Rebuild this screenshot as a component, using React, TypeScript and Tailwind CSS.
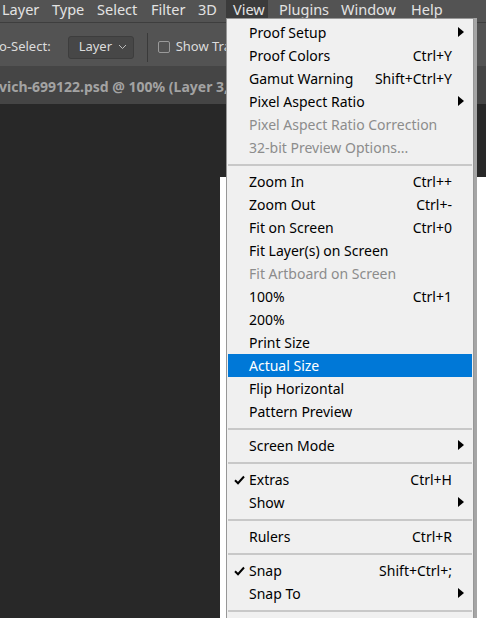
import React from "react";

type Item =
  | { sep: true }
  | {
      label: string;
      shortcut?: string;
      sub?: boolean;
      disabled?: boolean;
      checked?: boolean;
      active?: boolean;
    };

const items: Item[] = [
  { label: "Proof Setup", sub: true },
  { label: "Proof Colors", shortcut: "Ctrl+Y" },
  { label: "Gamut Warning", shortcut: "Shift+Ctrl+Y" },
  { label: "Pixel Aspect Ratio", sub: true },
  { label: "Pixel Aspect Ratio Correction", disabled: true },
  { label: "32-bit Preview Options...", disabled: true },
  { sep: true },
  { label: "Zoom In", shortcut: "Ctrl++" },
  { label: "Zoom Out", shortcut: "Ctrl+-" },
  { label: "Fit on Screen", shortcut: "Ctrl+0" },
  { label: "Fit Layer(s) on Screen" },
  { label: "Fit Artboard on Screen", disabled: true },
  { label: "100%", shortcut: "Ctrl+1" },
  { label: "200%" },
  { label: "Print Size" },
  { label: "Actual Size", active: true },
  { label: "Flip Horizontal" },
  { label: "Pattern Preview" },
  { sep: true },
  { label: "Screen Mode", sub: true },
  { sep: true },
  { label: "Extras", shortcut: "Ctrl+H", checked: true },
  { label: "Show", sub: true },
  { sep: true },
  { label: "Rulers", shortcut: "Ctrl+R" },
  { sep: true },
  { label: "Snap", shortcut: "Shift+Ctrl+;", checked: true },
  { label: "Snap To", sub: true },
  { sep: true },
];

// top menu entries, with the box width / left padding read off the screenshot
const topMenus = [
  { name: "Layer", cls: "w-[45px] pl-[2px]" },
  { name: "Type", cls: "w-[45px] pl-[7px]" },
  { name: "Select", cls: "w-[54px] pl-[7px]" },
  { name: "Filter", cls: "w-[47px] pl-[7px]" },
  { name: "3D", cls: "w-[35px] pl-[7px]" },
  { name: "View", cls: "w-[42px] pl-[7px] bg-[#3b3b3b]" },
  { name: "Plugins", cls: "w-[66px] pl-[11px]" },
  { name: "Window", cls: "w-[70px] pl-[7px]" },
  { name: "Help", cls: "w-[60px] pl-[7px]" },
];

const Check = () => (
  <svg width="11" height="10" viewBox="0 0 11 10" className="absolute left-[6px] top-[7px]">
    <path d="M1 5.2 L4 8.2 L10 1.5" fill="none" stroke="#000" strokeWidth="2" />
  </svg>
);

const Arrow = ({ color }: { color: string }) => (
  <svg width="6" height="10" viewBox="0 0 6 10" className="absolute right-[8px] top-[6px]">
    <path d="M0 0 L6 5 L0 10 Z" fill={color} />
  </svg>
);

const MenuRow = ({ item }: { item: Item }) => {
  if ("sep" in item) {
    return (
      <div className="flex h-[11px] items-center px-[1px]">
        <div className="h-[2px] w-full bg-[#c8c8c8]" />
      </div>
    );
  }
  const text = item.active ? "text-white" : item.disabled ? "text-[#8c8c8c]" : "text-black";
  return (
    <div
      className={`relative mx-[1px] flex h-[23px] items-center pl-[21px] pr-[20px] ${text} ${
        item.active ? "bg-[#0078d7]" : ""
      }`}
    >
      {item.checked && <Check />}
      <span className="flex-1">{item.label}</span>
      {item.shortcut && <span>{item.shortcut}</span>}
      {item.sub && <Arrow color={item.active ? "#fff" : "#000"} />}
    </div>
  );
};

export default function App() {
  return (
    <div
      className="relative flex h-[618px] w-[486px] flex-col overflow-hidden bg-[#282828]"
      style={{ fontFamily: '"Noto Sans", "Open Sans", sans-serif' }}
    >
      {/* menu bar */}
      <div className="flex h-[22px] items-center whitespace-nowrap bg-[#535353] text-[14.5px] leading-[17px] text-[#e3e3e3]">
        {topMenus.map((m) => (
          <div key={m.name} className={`flex h-full shrink-0 items-start pt-[1px] ${m.cls}`}>
            {m.name}
          </div>
        ))}
      </div>
      <div className="h-[1px] bg-[#3e3e3e]" />

      {/* options bar */}
      <div className="flex h-[43px] items-center whitespace-nowrap bg-[#535353] pt-[5px] text-[13px] text-[#dcdcdc]">
        <span className="-ml-[1px]">o-Select:</span>
        <div className="ml-[17px] flex h-[23px] w-[66px] shrink-0 items-center justify-between rounded-[3px] border border-[#3d3d3d] bg-[#474747] pl-[10px] pr-[6px]">
          <span>Layer</span>
          <svg width="9" height="6" viewBox="0 0 9 6">
            <path d="M1 1 L4.5 4.5 L8 1" fill="none" stroke="#bdbdbd" strokeWidth="1" />
          </svg>
        </div>
        <div className="ml-[13px] h-[29px] w-[1px] shrink-0 bg-[#3a3a3a]" />
        <div className="ml-[10px] h-[12px] w-[12px] shrink-0 rounded-[2px] border border-[#9a9a9a]" />
        <span className="ml-[6px]">Show Transform Controls</span>
      </div>

      {/* document tab */}
      <div className="flex h-[38px] items-center bg-[#454545] pt-[3px] text-[14px] font-bold text-[#a3a3a3]">
        <span className="-ml-[1px] whitespace-nowrap">vich-699122.psd @ 100% (Layer 3, RGB/8)</span>
      </div>
      <div className="flex-1 bg-[#282828]" />

      {/* window behind the menu */}
      <div className="absolute bottom-0 left-[220px] right-0 top-[177px] bg-white" />

      {/* View menu */}
      <div className="absolute left-[226px] top-[18px] h-[640px] w-[251px] border-r-[3px] border-[#a5a5a5]">
        <div className="h-full w-[248px] border border-[#979797] bg-[#f0f0f0] pt-[2px] text-[14px] leading-none">
          {items.map((it, i) => (
            <MenuRow key={i} item={it} />
          ))}
        </div>
      </div>
    </div>
  );
}
